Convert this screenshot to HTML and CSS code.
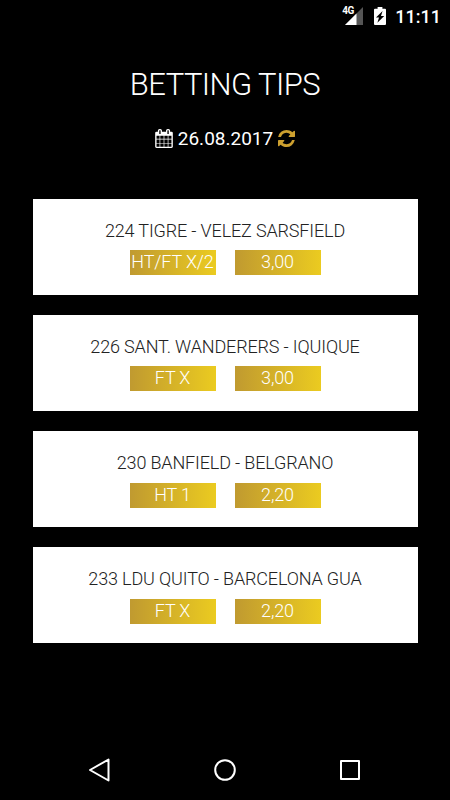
FILE: index.html
```html
<!DOCTYPE html>
<html lang="en">
<head>
  <meta charset="UTF-8" />
  <meta name="viewport" content="width=device-width, initial-scale=1.0"/>
  <title>Betting Tips</title>
  <link rel="stylesheet" href="styles.css">
</head>
<body>
  <div class="app">
    <div class="status-bar">
      <div class="signal">
        <svg viewBox="0 0 18 18"><path fill="#555" d="M18 0v18H0z"/><path fill="#fff" d="M11.5 6.5V18H0z"/></svg>
        <span class="network">4G</span>
      </div>
      <svg class="battery" viewBox="0 0 12 18"><path fill="#fff" d="M3.6 0h4.8v1.8H11a1 1 0 0 1 1 1V17a1 1 0 0 1-1 1H1a1 1 0 0 1-1-1V2.8a1 1 0 0 1 1-1h2.6z"/><path fill="#000" d="M8.6 4 2 10.6h3L3.4 15.8l6.800-6.800H7z"/></svg>
      <span class="clock">11:11</span>
    </div>

    <header>
      <h1>BETTING TIPS</h1>
      <div class="date">
        <svg class="calendar" viewBox="64 0 1664 1792"><path d="M192 1664h288v-288h-288v288zm352 0h320v-288h-320v288zm-352-352h288v-320h-288v320zm352 0h320v-320h-320v320zm-352-384h288v-288h-288v288zm736 736h320v-288h-320v288zm-384-736h320v-288h-320v288zm768 736h288v-288h-288v288zm-384-352h320v-320h-320v320zm-352-864v-288q0-13-9.500-22.500t-22.500-9.500h-64q-13 0-22.500 9.500t-9.500 22.500v288q0 13 9.500 22.500t22.500 9.500h64q13 0 22.500-9.500t9.500-22.500zm736 864h288v-320h-288v320zm-384-384h320v-288h-320v288zm384 0h288v-288h-288v288zm32-480v-288q0-13-9.500-22.500t-22.500-9.500h-64q-13 0-22.500 9.500t-9.500 22.500v288q0 13 9.500 22.500t22.500 9.500h64q13 0 22.500-9.500t9.500-22.500zm384-64v1280q0 52-38 90t-90 38h-1408q-52 0-90-38t-38-90v-1280q0-52 38-90t90-38h128v-96q0-66 47-113t113-47h64q66 0 113 47t47 113v96h384v-96q0-66 47-113t113-47h64q66 0 113 47t47 113v96h128q52 0 90 38t38 90z"/></svg>
        <span>26.08.2017</span>
        <svg class="refresh" viewBox="128 128 1536 1536"><path d="M1639 1056q0 5-1 7-64 268-268 434.500t-478 166.500q-146 0-282.500-55t-243.500-157l-129 129q-19 19-45 19t-45-19-19-45v-448q0-26 19-45t45-19h448q26 0 45 19t19 45-19 45l-137 137q71 66 161 102t187 36q134 0 250-65t186-179q11-17 53-117 8-23 30-23h192q13 0 22.500 9.500t9.500 22.500zm25-800v448q0 26-19 45t-45 19h-448q-26 0-45-19t-19-45 19-45l138-138q-148-137-349-137-134 0-250 65t-186 179q-11 17-53 117-8 23-30 23h-199q-13 0-22.500-9.500t-9.500-22.500v-7q65-268 270-434.500t480-166.500q146 0 284 55.500t245 156.500l130-129q19-19 45-19t45 19 19 45z"/></svg>
      </div>
    </header>

    <main class="tips">
      <div class="tip">
        <h2>224 TIGRE - VELEZ SARSFIELD</h2>
        <div class="bets"><span>HT/FT X/2</span><span>3,00</span></div>
      </div>
      <div class="tip">
        <h2>226 SANT. WANDERERS - IQUIQUE</h2>
        <div class="bets"><span>FT X</span><span>3,00</span></div>
      </div>
      <div class="tip">
        <h2>230 BANFIELD - BELGRANO</h2>
        <div class="bets"><span>HT 1</span><span>2,20</span></div>
      </div>
      <div class="tip">
        <h2>233 LDU QUITO - BARCELONA GUA</h2>
        <div class="bets"><span>FT X</span><span>2,20</span></div>
      </div>
    </main>

    <nav class="nav-bar">
      <svg viewBox="0 0 24 24"><path d="M20.500 1.500v21L2 12z"/></svg>
      <svg viewBox="0 0 24 24"><circle cx="12" cy="12" r="9.800"/></svg>
      <svg viewBox="0 0 24 24"><path d="M3 3h18v18H3z"/></svg>
    </nav>
  </div>
</body>
</html>
```

FILE: styles.css
```css
* { box-sizing: border-box; margin: 0; padding: 0; }
body {
  font-family: Roboto, sans-serif;
  background: #000;
  color: #fff;
}
svg { display: block; }
.app { display: flex; flex-direction: column; height: 800px; }

.status-bar {
  display: flex; align-items: center; justify-content: flex-end;
  height: 32px; padding-right: 9px;
}
.signal { position: relative; margin-right: 11px; }
.signal svg { width: 18px; height: 18px; }
.network {
  position: absolute; top: -2px; left: -3px;
  font-size: 10px; line-height: 12px; font-weight: 700;
  letter-spacing: -0.5px;
}
.battery { width: 12px; height: 18px; margin-right: 9px; }
.clock { font-size: 18px; font-weight: 500; }

header { height: 167px; padding-top: 34px; text-align: center; }
h1 {
  font-size: 31px; line-height: 38px; font-weight: 300;
  letter-spacing: -0.55px;
}
.date {
  display: flex; align-items: center; justify-content: center;
  margin-top: 23px; font-size: 19px; line-height: 24px;
}
.calendar { width: 18px; height: 19px; margin: -1px 5px 0 0; fill: #fff; }
.refresh { width: 17px; height: 17px; margin: -1px 0 0 5px; fill: #cda02f; }

.tips {
  display: flex; flex-direction: column; gap: 20.150px;
  flex-grow: 1; padding: 0 32.500px;
}
.tip {
  height: 96px; padding-top: 21px;
  background: #fff; text-align: center;
}
h2 {
  font-size: 18px; line-height: 22px; font-weight: 300;
  letter-spacing: -0.15px; color: #222;
}
.bets { display: flex; justify-content: center; gap: 19px; margin-top: 8.250px; }
.bets span {
  width: 86px; height: 25px;
  background: linear-gradient(to right, #c09a30, #ebcb20);
  font-size: 18px; line-height: 24px; font-weight: 300;
  letter-spacing: -0.15px; white-space: nowrap;
}

.nav-bar {
  display: flex; justify-content: center; gap: 101px;
  height: 60px; padding-top: 18px;
}
.nav-bar svg {
  width: 24px; height: 24px;
  fill: none; stroke: #fff; stroke-width: 2; stroke-linejoin: round;
}
```
